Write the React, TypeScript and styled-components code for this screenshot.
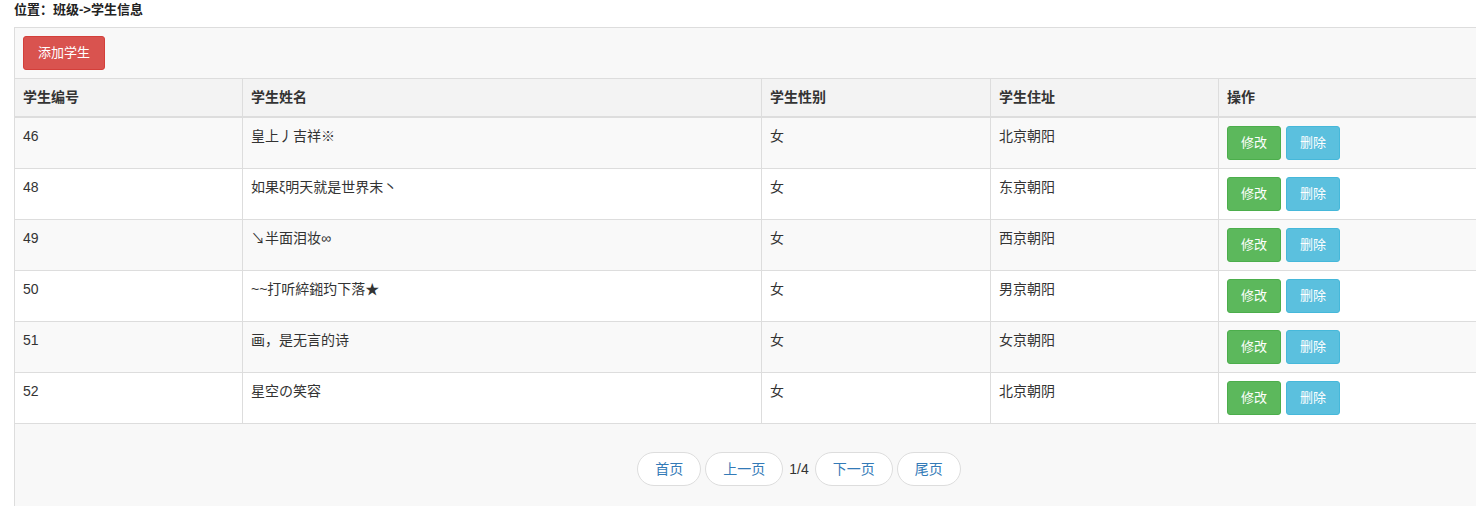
import React from "react";
import styled, { createGlobalStyle } from "styled-components";

const Global = createGlobalStyle`
  html, body { margin: 0; padding: 0; overflow: hidden; background: #fff; }
  body { font-family: "Liberation Sans", "Noto Sans CJK SC", sans-serif; color: #333; font-size: 14px; }
`;

const Page = styled.div`
  padding: 0 0 0 14px;
  width: 1570px;
`;

const Crumb = styled.div`
  font-size: 13px;
  font-weight: bold;
  line-height: 20px;
  height: 27px;
  color: #222;
`;

const Panel = styled.div`
  border: 1px solid #ddd;
  background: #f8f8f8;
  height: 600px;
`;

const Toolbar = styled.div`
  padding: 8px;
  display: flex;
`;

const Btn = styled.button<{ $bg: string; $bd: string; $w: number }>`
  width: ${(p) => p.$w}px;
  height: 34px;
  padding: 0;
  border: 1px solid ${(p) => p.$bd};
  background: ${(p) => p.$bg};
  color: #fff;
  border-radius: 3px;
  font-family: "Liberation Sans", "Noto Sans CJK SC", sans-serif;
  font-size: 13px;
  line-height: 32px;
  cursor: pointer;
`;

const Table = styled.table`
  width: 100%;
  border-collapse: collapse;
  table-layout: fixed;
`;

const Th = styled.th<{ $w?: number }>`
  ${(p) => (p.$w ? `width: ${p.$w}px;` : "")}
  text-align: left;
  font-weight: bold;
  font-size: 14px;
  line-height: 20px;
  padding: 8px 8px 9px;
  background: #f3f3f3;
  border: 1px solid #ddd;
  border-bottom-width: 2px;
  &:first-child { border-left: none; }
  &:last-child { border-right: none; }
`;

const Tr = styled.tr<{ $odd: boolean }>`
  background: ${(p) => (p.$odd ? "#f9f9f9" : "#fff")};
`;

const Td = styled.td`
  vertical-align: top;
  font-size: 14px;
  line-height: 20px;
  padding: 8px;
  border: 1px solid #ddd;
  &:first-child { border-left: none; }
  &:last-child { border-right: none; }
`;

const Actions = styled.div`
  display: flex;
  gap: 5px;
`;

const Pager = styled.div`
  display: flex;
  justify-content: center;
  align-items: center;
  gap: 4px;
  margin-top: 28px;
`;

const PageBtn = styled.a`
  display: inline-block;
  height: 34px;
  box-sizing: border-box;
  line-height: 32px;
  padding: 0 17px;
  border: 1px solid #ddd;
  border-radius: 17px;
  background: #fff;
  color: #337ab7;
  font-size: 14px;
  text-decoration: none;
`;

const PageInfo = styled.span`
  font-size: 14px;
  color: #333;
  margin: 0 2px;
`;

const rows = [
  ["46", "皇上丿吉祥※", "女", "北京朝阳"],
  ["48", "如果ξ明天就是世界末丶", "女", "东京朝阳"],
  ["49", "↘半面泪妆∞", "女", "西京朝阳"],
  ["50", "~~打听綷鎺玓下落★", "女", "男京朝阳"],
  ["51", "画，是无言的诗", "女", "女京朝阳"],
  ["52", "星空の笑容", "女", "北京朝阴"],
];

export default function App() {
  return (
    <Page>
      <Global />
      <Crumb>位置：班级-&gt;学生信息</Crumb>
      <Panel>
        <Toolbar>
          <Btn $bg="#d9534f" $bd="#d43f3a" $w={82}>添加学生</Btn>
        </Toolbar>
        <Table>
          <thead>
            <tr>
              <Th $w={211}>学生编号</Th>
              <Th $w={502}>学生姓名</Th>
              <Th $w={212}>学生性别</Th>
              <Th $w={211}>学生住址</Th>
              <Th>操作</Th>
            </tr>
          </thead>
          <tbody>
            {rows.map((r, i) => (
              <Tr key={r[0]} $odd={i % 2 === 0}>
                <Td>{r[0]}</Td>
                <Td>{r[1]}</Td>
                <Td>{r[2]}</Td>
                <Td>{r[3]}</Td>
                <Td>
                  <Actions>
                    <Btn $bg="#5cb85c" $bd="#4cae4c" $w={54}>修改</Btn>
                    <Btn $bg="#5bc0de" $bd="#46b8da" $w={54}>删除</Btn>
                  </Actions>
                </Td>
              </Tr>
            ))}
          </tbody>
        </Table>
        <Pager>
          <PageBtn href="#">首页</PageBtn>
          <PageBtn href="#">上一页</PageBtn>
          <PageInfo>1/4</PageInfo>
          <PageBtn href="#">下一页</PageBtn>
          <PageBtn href="#">尾页</PageBtn>
        </Pager>
      </Panel>
    </Page>
  );
}
